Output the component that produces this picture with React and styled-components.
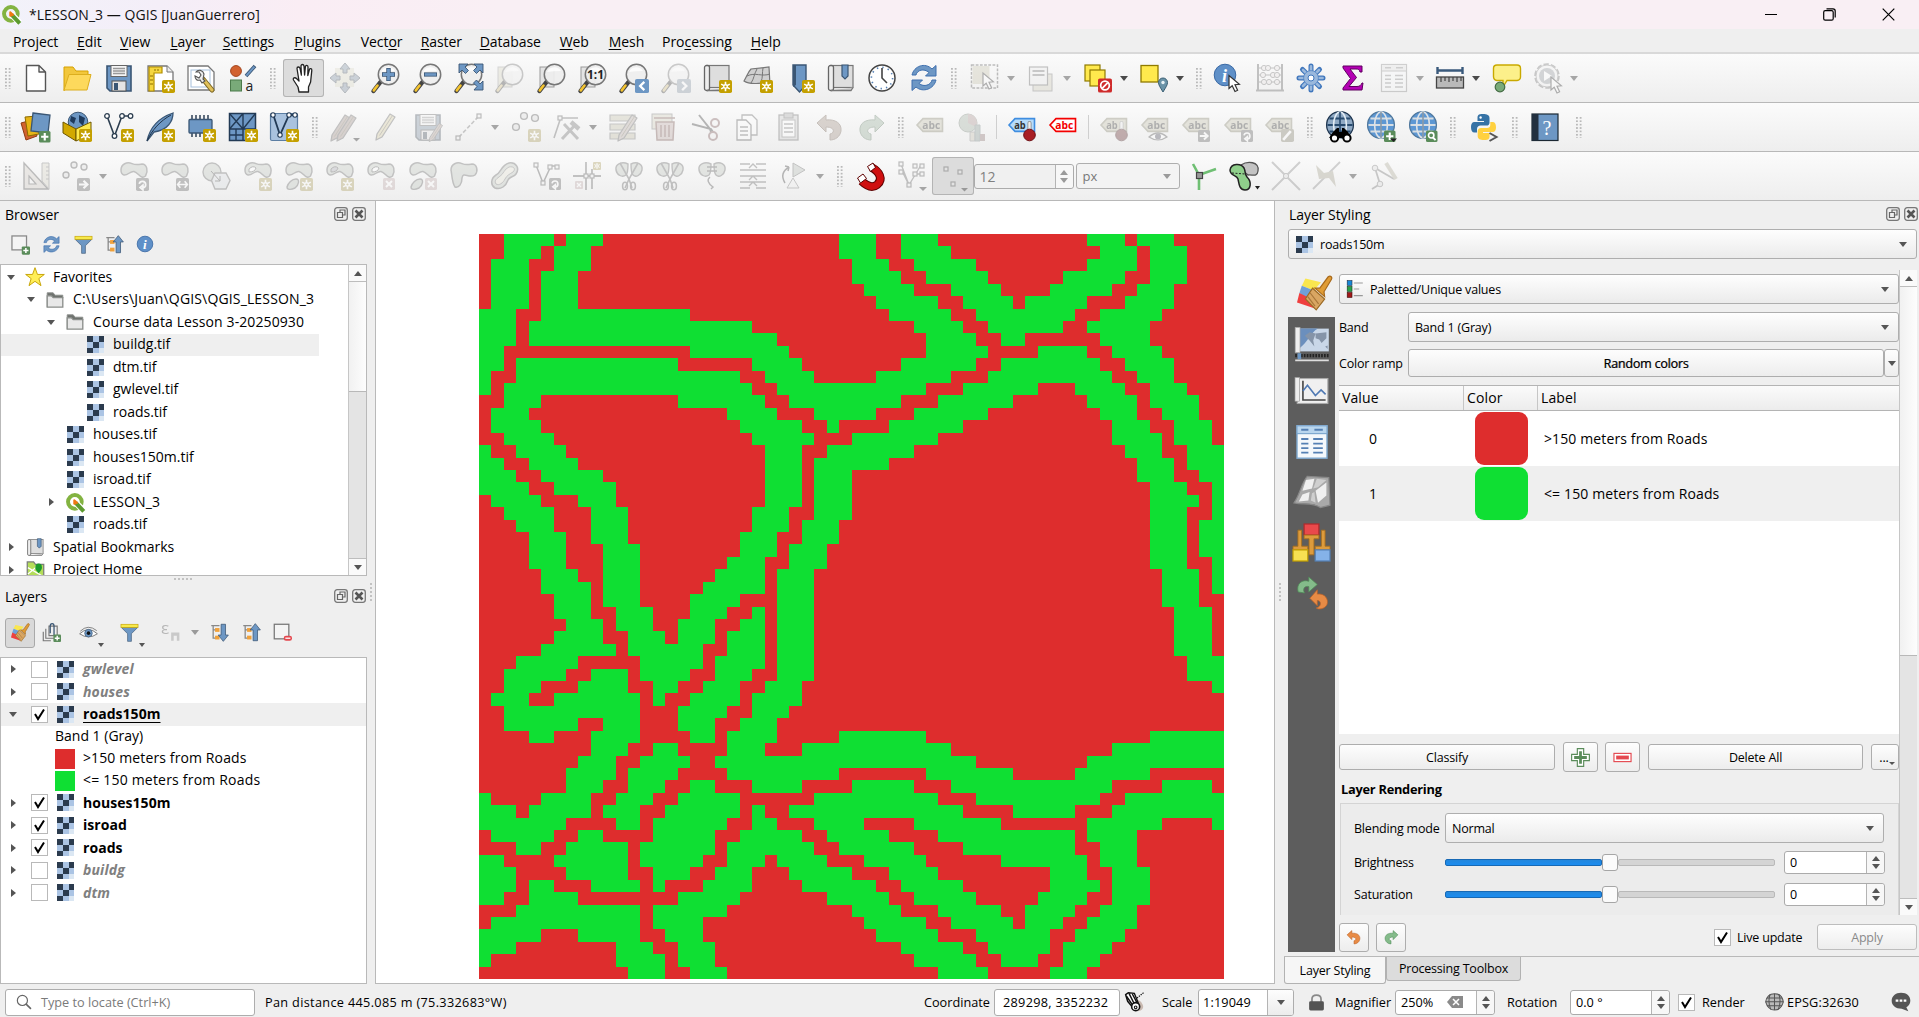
import React from "react";
import styled, { createGlobalStyle, css } from "styled-components";

const Global = createGlobalStyle`
  html, body { margin: 0; padding: 0; background: #efefef; }
  * { box-sizing: border-box; }
  body {
    font-family: "Open Sans", "Noto Sans", sans-serif;
    font-size: 14px;
    color: #000;
    overflow: hidden;
  }
`;

/* ------------------------------------------------------------------ */
/* Icon drawings, all on a 30 x 30 grid                                 */
/* ------------------------------------------------------------------ */

const BLUE = "#6d97c4";
const EDGE = "#3a5674";
const GOLD = "#c4a000";
const GREEN = "#5a8c5a";

const Badge = ({ x = 18, y = 18, s = 12, fill = GOLD, children }) => (
  <g transform={`translate(${x} ${y}) scale(${s / 12})`}>
    <rect width="12" height="12" rx="1.6" fill={fill} />
    {children}
  </g>
);
const Star = (p) => (
  <Badge x={17} y={17} s={13} {...p}>
    <path d="M6 1.6V10.4M2 3.8L10 8.2M10 3.8L2 8.2" stroke="#fff" strokeWidth="1.5" />
    <circle cx="6" cy="6" r="2.2" fill="#fff" />
    <circle cx="6" cy="6" r="1" fill={GOLD} />
  </Badge>
);
const Plus = (p) => (
  <Badge fill={GREEN} {...p}>
    <path d="M6 2.2V9.8M2.2 6H9.8" stroke="#fff" strokeWidth="2.2" />
  </Badge>
);
const Cross = (p) => (
  <Badge fill="#d8a5a5" {...p}>
    <path d="M3 3L9 9M9 3L3 9" stroke="#fff" strokeWidth="2" />
  </Badge>
);
const ArrowRight = (p) => (
  <Badge fill="#666" {...p}>
    <path d="M1.8 6H8M6 2.6L9.6 6L6 9.4" stroke="#fff" strokeWidth="2" fill="none" />
  </Badge>
);
const Turn = (p) => (
  <Badge fill="#666" {...p}>
    <path d="M3 5.4A3 3 0 1 1 6.4 9M6.4 6.6V11L3.8 8.8Z" stroke="#fff" strokeWidth="1.6" fill="none" />
  </Badge>
);
const Lens = ({ children, page }) => (
  <>
    {page && <rect x="3" y="4" width="14" height="20" fill={page === 2 ? "#ded9a8" : "#e4e4e4"} stroke="#999" strokeWidth="1" />}
    <path d="M9.5 19L2.5 28" stroke="#444" strokeWidth="4.4" strokeLinecap="round" />
    <path d="M6.5 22.5L2.8 27.4" stroke="#f4c430" strokeWidth="2.6" strokeLinecap="round" />
    <circle cx="17.5" cy="11.5" r="10.2" fill="#eeeeee" fillOpacity=".92" stroke="#777" strokeWidth="1.5" />
    <path d="M10 9A8 8 0 0 1 24 8Q17 8 10 9Z" fill="#fff" opacity=".8" />
    {children}
  </>
);
const Pencil = ({ t = "", fill = "#e6cf6a" }) => (
  <g transform={t}>
    <path d="M7 22L20 2L25 5L12 25L6 28Z" fill={fill} stroke="#666" strokeWidth="1.3" strokeLinejoin="round" />
    <path d="M9.5 23.5L22.5 3.5" stroke="#8a7a4a" strokeWidth="1" />
  </g>
);
const Globe = ({ children, dark }) => (
  <>
    <circle cx="15" cy="13" r="13.4" fill={dark ? "#8fa9c4" : "#5d97d3"} stroke={dark ? "#1f3650" : "#50789d"} strokeWidth="1.3" />
    <path d="M2.5 13H27.5M4.5 6.5H25.5M4.5 19.5H25.5" stroke={dark ? "#274a6e" : "#d7dde2"} strokeWidth="1.8" />
    <ellipse cx="15" cy="13" rx="6.4" ry="13" fill="none" stroke={dark ? "#e3edf5" : "#dfe3e7"} strokeWidth="1.6" />
    <path d="M15 0V26" stroke={dark ? "#274a6e" : "#8b9aa8"} strokeWidth="1.6" />
    {children}
  </>
);
const BLOB = "M2 9C2 3 8 .5 13 2.6C17 4.2 19 3.6 23 3C28 3 29.5 10 26.5 15C22 19 20 12 15 10.5C11 10 9 14.5 5 14C3 13.5 2 12 2 9Z";
const Blob = ({ d = BLOB, fill = "#b9c9b5" }) => <path d={d} fill={fill} stroke="#666" strokeWidth="1.5" />;
const Blob2 = () => (
  <>
    <Blob />
    <path d="M12 18C16 18 15 24 11 27C7 29 3 29 3 26C4 22 8 18 12 18Z" fill="#b9c9b5" stroke="#666" strokeWidth="1.4" />
  </>
);
const Tag = ({ fill = "#c9c38d", edge = "#8c8854", text = "abc", color = "#333", y = 7 }) => (
  <g transform={`translate(0 ${y - 7})`}>
    <path d="M2 14L8 7.6H27.5V20.4H8Z" fill={fill} stroke={edge} strokeWidth="1.6" />
    <text x="7.2" y="17.8" fontSize="10.5" fontWeight="700" fill={color} fontFamily="Open Sans" textLength={text === "ab" ? 11.5 : 18} lengthAdjust="spacingAndGlyphs">{text}</text>
  </g>
);
const Pin = () => (
  <>
    <path d="M22.5 19V11" stroke="#888" strokeWidth="4" strokeLinecap="round" />
    <path d="M22.5 19V11" stroke="#eee" strokeWidth="2.4" strokeLinecap="round" />
    <circle cx="22.5" cy="23" r="5.8" fill="#a81e24" stroke="#6d0d12" strokeWidth="1" />
  </>
);
const Cells = () => (
  <g shapeRendering="crispEdges">
    <rect x="2" y="2" width="26" height="26" fill="#dbe7f3" />
    <path d="M2 11H11V20H2ZM11 2H20V11H11ZM20 11H28V20H20ZM11 20H20V28H11Z" fill="#abc4e4" />
    <path d="M2 2H11V11H2ZM20 2H28V11H20ZM11 11H20V20H11ZM2 20H11V28H2Z" fill="#2b3b4e" />
  </g>
);
const Refresh = () => (
  <>
    <path d="M3 12C5 3 16 -1 23 6L27 2.5V13H16.5L20 9.5C15 5 8 7 7 12Z" fill={BLUE} stroke="#3e6fae" strokeWidth="1" />
    <path d="M27 17C25 26 14 30 7 24L3 27.5V17H13.5L10 20.5C15 24.5 22 22 23 17Z" fill={BLUE} stroke="#3e6fae" strokeWidth="1" />
  </>
);
const Cursor = ({ x = 0, y = 0 }) => (
  <path transform={`translate(${x} ${y})`} d="M0 0V13L3.2 10.2L6 16L8.6 14.8L6 9.2L10.4 8.8Z" fill="#fff" stroke="#333" strokeWidth="1.2" />
);
const Scissors = () => (
  <>
    <path d="M6 2L15 18L18 27M24 2L15 18L11 27" stroke="#666" strokeWidth="1.6" fill="none" />
    <ellipse cx="11" cy="25" rx="2.4" ry="3.8" fill="none" stroke="#666" strokeWidth="1.6" />
    <ellipse cx="19" cy="25" rx="2.4" ry="3.8" fill="none" stroke="#666" strokeWidth="1.6" />
  </>
);
const Halves = () => (
  <path d="M14 3C8 0 1 3 2 9C3 14 8 17 12 14C14 12 14 8 14 3ZM17 3C23 0 29 3 28 9C27 14 22 17 19 14C17 12 17 8 17 3Z" fill="#b9c9b5" stroke="#666" strokeWidth="1.4" />
);
const Brush = () => (
  <>
    <path d="M7 3L20 6L14 13L4 9Z" fill="#f9e64f" />
    <path d="M4 9L14 13L8 20L2 15Z" fill="#6f9fd8" />
    <path d="M2 15L10 19L15 28L0 23Z" fill="#ef3f3f" />
    <path d="M13 11L23 20L16 29L7 20Z" fill="#d9a662" stroke="#9b6a24" strokeWidth="1" />
    <path d="M11 15L18 24M9 18L15 26" stroke="#a9773a" strokeWidth="1" />
    <path d="M15 11L19 11L26 1.5C28 0 30 2 28.5 4L22.5 14L23 18Z" fill="#e09c35" stroke="#a8691b" strokeWidth="1" />
  </>
);
const UndoArrow = ({ fill = "#e88b45", edge = "#b9622a" }) => (
  <path d="M2 11L11 3V8C20 7 27 11 26 19C25 25 20 28 15 28V22C20 21 20 15 11 15V20Z" fill={fill} stroke={edge} strokeWidth="1" />
);
const RedoArrow = () => (
  <path d="M28 11L19 3V8C10 7 3 11 4 19C5 25 10 28 15 28V22C10 21 10 15 19 15V20Z" fill="#84bb8a" stroke="#4e8a56" strokeWidth="1" />
);
const Funnel = () => (
  <>
    <path d="M2 7H28L18 17V29H12V17Z" fill={BLUE} stroke={EDGE} strokeWidth="1" />
    <rect x="1.5" y="2" width="27" height="5" fill="#f7e94a" stroke="#c4a000" strokeWidth="1" />
  </>
);
const TreeArrow = ({ down }) => (
  <>
    <path d="M2 4H15M5 4V25M5 11H10M5 24H10" stroke="#888" strokeWidth="2" fill="none" />
    <rect x="8" y="8" width="7" height="6" fill="#f0a13a" />
    <rect x="8" y="20" width="7" height="6" fill="#f0a13a" />
    <path transform={down ? "rotate(180 21 15)" : ""} d="M21 1L29 11H24.5V28H17.5V11H13Z" fill={BLUE} stroke={EDGE} strokeWidth="1.2" />
  </>
);
const BookBase = () => (
  <>
    <rect x="5" y="2.5" width="22" height="22" fill="#dedede" stroke="#777" strokeWidth="1.2" />
    <rect x="2.5" y="2.5" width="5" height="25" rx="2" fill="#eee" stroke="#666" strokeWidth="1.3" />
    <path d="M5 27.5H25L27 24.5" fill="#ccc" stroke="#777" strokeWidth="1.3" />
  </>
);
const Logo = () => (
  <>
    <circle cx="14" cy="14" r="10.8" fill="none" stroke="#83b341" strokeWidth="6.2" />
    <path d="M14 14L28 28" stroke="#fff" strokeWidth="10" />
    <path d="M15.5 15.5L28 29" stroke="#5c9a2f" strokeWidth="6.4" />
    <path d="M13 11.5L17.5 15.5L13 17Z" fill="#ee7913" stroke="#ee7913" strokeWidth="3" strokeLinejoin="round" />
  </>
);
const Gear = () => (
  <>
    <g stroke="#4077bd" strokeWidth="5" strokeLinecap="round">
      <path d="M15 3V27M3 15H27M6.5 6.5L23.5 23.5M23.5 6.5L6.5 23.5" />
    </g>
    <g stroke="#9ab8dc" strokeWidth="2.6" strokeLinecap="round">
      <path d="M15 3.4V26.6M3.4 15H26.6M7 7L23 23M23 7L7 23" />
    </g>
    <circle cx="15" cy="15" r="7.4" fill="#9ab8dc" stroke="#4077bd" strokeWidth=".6" />
    <circle cx="15" cy="15" r="3" fill="#fff" stroke="#4077bd" strokeWidth="1" />
  </>
);
const Nodes = ({ pts }) => pts.map(([x, y], i) => (
  <rect key={i} x={x - 2} y={y - 2} width="4" height="4" fill="#eee" stroke="#555" strokeWidth="1.2" />
));
const Table = ({ head = "#b9d6ee", edge = "#7fa9cf", line = "#5580b4" }) => (
  <>
    <rect x="2.5" y="1.5" width="25" height="27" fill="#f4f8fb" stroke={edge} strokeWidth="1.2" />
    <rect x="2.5" y="1.5" width="25" height="6.5" fill={head} stroke={edge} strokeWidth="1" />
    <path d="M6 4.8H12M17 4.8H24M6 12.5H12M16 12.5H24M6 16.3H12M16 16.3H24M6 20.1H12M16 20.1H24M6 23.9H12M16 23.9H24" stroke={line} strokeWidth="1.5" />
  </>
);

const ART = {
  newFile: () => <path d="M5.5 2.5H18L24.5 9V28H5.5Z M18 2.5V9H24.5" fill="#fff" stroke="#555" strokeWidth="1.4" strokeLinejoin="round" />,
  open: () => (<>
    <path d="M2 28V4H11L14 8H26V13" fill="#f2c73c" stroke="#d6a100" strokeWidth="1" />
    <path d="M2 27L7 11.5H29L25 27Z" fill="#fdd95c" stroke="#dcae1e" strokeWidth="1" />
  </>),
  save: () => (<>
    <path d="M3 3H27V28H6L3 25Z" fill={BLUE} stroke={EDGE} strokeWidth="1.6" />
    <rect x="7" y="2.5" width="16" height="11" fill="#f5f5f5" stroke="#666" />
    <path d="M9 5.5H21M9 8H21M9 10.5H21" stroke="#999" strokeWidth="1.3" />
    <rect x="8" y="18" width="14" height="10" fill="#e4e4e4" stroke="#555" />
    <rect x="10" y="20" width="4" height="7" fill={EDGE} />
  </>),
  newLayout: () => (<>
    <path d="M3 3H22L28 9V28H3Z" fill="#fff" stroke="#777" strokeWidth="1.3" />
    <path d="M4 4H17V10H9V28H4Z" fill="#f5d63f" stroke="#b38f00" strokeWidth="1.2" />
    <path d="M10 6V8M13 6V8M5 13H8M5 17H8M5 21H8" stroke="#8a6c00" />
    <path d="M22 3V9H28" fill="#eee" stroke="#777" /><Star />
  </>),
  layoutMgr: () => (<>
    <path d="M2 3H22L28 9V27H2Z" fill="#fff" stroke="#777" strokeWidth="1.3" />
    <rect x="5" y="7" width="19" height="17" fill="#fff" stroke="#a6bfdc" />
    <path d="M17 16L26 27" stroke="#7a6420" strokeWidth="5" strokeLinecap="round" />
    <path d="M18 17L26 27" stroke="#e0c05a" strokeWidth="3" strokeLinecap="round" />
    <path d="M10 9C12 6 17 7 18 11L17 16L19 18L16 20L14 17C11 18 9 16 9 13L13 15L15 12L13 9Z" fill="#eee" stroke="#555" strokeWidth="1.1" />
  </>),
  styleMgr: () => (<>
    <circle cx="8" cy="8" r="5.4" fill="#d2622f" stroke="#a3431b" />
    <path d="M18 13L27 3" stroke={EDGE} strokeWidth="3.6" /><path d="M18.4 12.6L26.4 3.6" stroke={BLUE} strokeWidth="2" />
    <rect x="2.5" y="17" width="11" height="11" fill="#79aa79" stroke="#4b7a4b" />
    <text x="17.5" y="28" fontSize="14" fill="#222" fontFamily="Open Sans">a</text>
  </>),
  hand: () => (
    <path d="M10 29L9 24L4.5 17C3.5 15 6 14 7.5 15.5L10 18L8 5.5C8 3.6 10.5 3.4 11 5.4L12.4 12L12 3C12 1 14.6 1 15 3L15.6 12L16.4 3.6C16.7 1.8 19 2 19 4L18.8 12.6L20.4 6.6C21 5 23 5.4 22.8 7.4L21.6 19L19.5 24V29Z" fill="#fff" stroke="#222" strokeWidth="1.3" strokeLinejoin="round" />
  ),
  panSel: () => (<>
    <rect x="5" y="5" width="19" height="19" fill="#e3dfb4" />
    <path d="M15 0L20 6H17V10H13V6H10ZM15 30L20 24H17V20H13V24H10ZM0 15L6 10V13H10V17H6V20ZM30 15L24 10V13H20V17H24V20Z" fill={BLUE} stroke={EDGE} />
  </>),
  zoomIn: () => <Lens><path d="M17.5 5V18M11 11.5H24" stroke={EDGE} strokeWidth="4.4" /><path d="M17.5 5.8V17.2M11.8 11.5H23.2" stroke={BLUE} strokeWidth="2.8" /></Lens>,
  zoomOut: () => <Lens><path d="M11 11.5H24" stroke={EDGE} strokeWidth="4.2" /><path d="M11.8 11.5H23.2" stroke={BLUE} strokeWidth="2.6" /></Lens>,
  zoomFull: () => <Lens><path d="M5 1H14L11 4L14.5 7.5L11.5 10.5L8 7L5 10ZM29 1V10L26 7L22.5 10.5L19.5 7.5L23 4L20 1ZM29 27V18L26 21L22.5 17L19.5 20L23 23.5L20 27Z" fill={BLUE} stroke={EDGE} strokeWidth=".9" /></Lens>,
  zoomSel: () => <Lens page={2} />,
  zoomLayer: () => <Lens page={1} />,
  zoomNative: () => <Lens page={1}><text x="9" y="16" fontSize="12" fontWeight="700" fill="#222" fontFamily="Open Sans" textLength="17" lengthAdjust="spacingAndGlyphs">1:1</text></Lens>,
  zoomLast: () => <Lens><Badge x={16} y={16} s={14} fill={BLUE}><path d="M8 2.5L4.4 6L8 9.5" stroke="#fff" strokeWidth="2" fill="none" /></Badge></Lens>,
  zoomNext: () => <Lens><Badge x={16} y={16} s={14} fill="#7d9cc0"><path d="M4.4 2.5L8 6L4.4 9.5" stroke="#fff" strokeWidth="2" fill="none" /></Badge></Lens>,
  newMap: () => <><BookBase /><Star /></>,
  new3d: () => (<>
    <path d="M1 18C4 13 5 9 8 6L26 4L27 22C20 17 10 24 1 18Z" fill="#d0d0d0" stroke="#777" strokeWidth="1.2" />
    <path d="M4 13C12 9 19 14 27 11M14 6C11 11 11 16 8 20M20 5C19 10 20 14 18 19" stroke="#777" fill="none" /><Star />
  </>),
  newBookmark: () => <><path d="M8 2H21V22L14.5 29L8 22Z" fill={BLUE} stroke={EDGE} strokeWidth="1.4" /><path d="M8 2H11V22L8 24Z" fill={EDGE} /><Star /></>,
  bookmarks: () => <><BookBase /><path d="M16 2H22V13L19 16L16 13Z" fill={BLUE} stroke={EDGE} strokeWidth="1.2" /></>,
  clock: () => (<>
    <circle cx="15" cy="15" r="13" fill="#fff" stroke="#444" strokeWidth="1.5" />
    <circle cx="15" cy="15" r="10.6" fill="none" stroke="#5580b4" strokeWidth="1.6" strokeDasharray="1.4 4.15" />
    <path d="M15 5V15L20 20" stroke="#444" strokeWidth="1.6" fill="none" />
  </>),
  refresh: () => <Refresh />,
  select: () => (<>
    <rect x="1.5" y="2" width="26" height="23" fill="none" stroke="#555" strokeWidth="1.5" strokeDasharray="2.8 1.4" />
    <rect x="2.5" y="3" width="17" height="18" fill="#cfc791" /><Cursor x={13} y={10} />
  </>),
  selForm: () => (<>
    <rect x="7" y="11" width="19" height="17" fill="#d8d1a5" stroke="#777" />
    <rect x="3.5" y="4" width="18" height="18" fill="#eee" stroke="#666" strokeWidth="1.2" />
    <path d="M6.5 8H18.5M6.5 12H18.5" stroke="#777" strokeWidth="2.2" />
  </>),
  deselect: () => (<>
    <rect x="2" y="2" width="15" height="16" fill="#ffe94d" stroke="#8f7a00" strokeWidth="1.2" />
    <rect x="7" y="7" width="15" height="16" fill="#ffe94d" stroke="#8f7a00" strokeWidth="1.2" />
    <Badge x={15} y={15.5} s={14} fill="#cf2b2b"><circle cx="6" cy="6" r="3.7" fill="none" stroke="#fff" strokeWidth="1.5" /><path d="M3.6 8.4L8.4 3.6" stroke="#fff" strokeWidth="1.5" /></Badge>
  </>),
  selLoc: () => (<>
    <rect x="2" y="2.5" width="17" height="16.5" fill="#ffe94d" stroke="#8f7a00" strokeWidth="1.3" />
    <path d="M24 29C21 24 19.5 22 19.5 19.5A4.4 4.4 0 0 1 28.5 19.5C28.5 22 27 24 24 29Z" fill="#6a93a8" stroke="#3a5f74" strokeWidth="1" />
    <circle cx="24" cy="19.5" r="1.7" fill="#e8f2f6" />
  </>),
  identify: () => (<>
    <circle cx="12" cy="12" r="10.8" fill="#5f90c8" stroke="#3b6aa5" strokeWidth="1" />
    <text x="9" y="18.5" fontSize="18" fontStyle="italic" fontWeight="700" fill="#fff" fontFamily="Liberation Serif">i</text><Cursor x={16} y={12.5} />
  </>),
  abacus: () => (<>
    <path d="M3 1V28M27 1V28M1 27.5H29" stroke="#666" strokeWidth="2" />
    <path d="M3 5H27M3 12H27M3 19H27" stroke="#666" />
    {[[9, 5], [13, 5], [22, 5], [8, 12], [18, 12], [22, 12], [9, 19], [14, 19], [22, 19]].map(([x, y]) => <circle key={x + "-" + y} cx={x} cy={y} r="2.6" fill="#efe4e4" stroke="#777" />)}
  </>),
  gear: () => <Gear />,
  sigma: () => <path d="M5 3H24V9H22C21.5 6.5 20 6 18 6H12L18.5 14.5L11 23.5H19C22 23.5 23 22 24 20H25L24 27H5V25L12.5 15.5L5 5Z" fill="#b400b4" stroke="#5e005e" strokeWidth="1" />,
  table: () => <Table head="#e0e0e0" edge="#888" line="#888" />,
  measure: () => (<>
    <path d="M2 7.5H28M2.5 4V11M27.5 4V11" stroke="#3a5a7c" strokeWidth="2.4" />
    <rect x="1.5" y="14" width="27" height="11" fill="#b9b9b9" stroke="#444" strokeWidth="1.3" />
    <path d="M6 14V19M10 14V18M14 14V19M18 14V18M22 14V19M26 14V18" stroke="#444" strokeWidth="1.2" />
  </>),
  tips: () => (<>
    <path d="M5 2H25Q28.5 2 28.5 5.5V14Q28.5 17 25 17.5H15L11 24V17.5H5Q1.5 17 1.5 13.5V5.5Q1.5 2 5 2Z" fill="#fcf08a" stroke="#c9a900" strokeWidth="1.4" />
    <circle cx="8" cy="24" r="4.8" fill="#79aa79" stroke="#446b44" strokeWidth="1.2" />
  </>),
  action: () => (<>
    <circle cx="14" cy="13" r="11.5" fill="#f2f2f2" stroke="#777" strokeWidth="2.6" strokeDasharray="5.2 2" />
    <circle cx="14" cy="13" r="11" fill="#f2f2f2" stroke="#888" strokeWidth="1" />
    <circle cx="14" cy="13" r="8" fill="#8f9ca8" /><path d="M11 8L19 13L11 18Z" fill="#fff" /><Cursor x={18} y={14} />
  </>),

  dataSrc: () => (<>
    <path d="M0 11L11 8L16 24L5 28Z" fill="#d2622f" stroke="#8e3a13" />
    <path d="M4 5L16 4L18 22L7 24Z" fill="#e7b416" stroke="#8a6a00" />
    <path d="M12 1L29 3L27 21L10 19Z" fill={BLUE} stroke={EDGE} strokeWidth="1.3" /><Plus x={18} y={19} s={11.5} />
  </>),
  newGpkg: () => (<>
    <circle cx="16" cy="10" r="9.8" fill={BLUE} stroke={EDGE} /><path d="M9 4L14 6L12 12L8 9ZM17 3L23 6L21 14L17 10Z" fill="#1f3a5c" />
    <path d="M1 10L14 17V29L1 21Z" fill="#d2a800" stroke="#6d5600" /><path d="M14 17L29 10V22L14 29Z" fill="#ffe94d" stroke="#6d5600" /><Star />
  </>),
  newShp: () => (<>
    <path d="M3 4L10.5 24L18 4H26" stroke="#2c3e50" strokeWidth="1.6" fill="none" />
    {[[3, 4], [10.5, 24], [18, 4], [26.5, 4]].map(([x, y]) => <circle key={x} cx={x} cy={y} r="2.3" fill="#fff" stroke="#2c3e50" strokeWidth="1.3" />)}<Star />
  </>),
  newSpatialite: () => <><path d="M2 29C5 15 13 6 28 1C28 9 23 18 9 20Z" fill={BLUE} stroke={EDGE} strokeWidth="1.3" /><path d="M2 29C7 18 15 9 26 3" stroke="#20344a" fill="none" /><Star /></>,
  newMem: () => (<>
    <path d="M6 3V8M10 3V8M14 3V8M18 3V8M22 3V8M6 20V25M10 20V25M14 20V25" stroke="#20344a" strokeWidth="1.4" />
    <rect x="3" y="7.5" width="23" height="13.5" rx="1" fill={BLUE} stroke={EDGE} strokeWidth="1.3" /><Star />
  </>),
  newMesh: () => (<>
    <rect x="1.5" y="1.5" width="26" height="27" fill={BLUE} stroke="#223a55" strokeWidth="1.5" />
    <path d="M1.5 17H27.5M15 1.5V28M1.5 1.5L15 17M15 1.5L1.5 17M15 17L27.5 1.5M1.5 23H15M8 17V28" stroke="#223a55" strokeWidth="1.4" /><Star />
  </>),
  newGpx: () => (<>
    <rect x="1.5" y="1.5" width="27" height="27" rx="1.5" fill="#a9c2de" stroke="#5c7ea3" strokeWidth="1.2" />
    <path d="M4 2L11 23L20 3H27" stroke="#223a55" strokeWidth="1.8" fill="none" />
    {[[4, 3], [11, 23], [20, 3], [26, 3]].map(([x, y]) => <circle key={x} cx={x} cy={y} r="2.2" fill="#fff" stroke="#223a55" strokeWidth="1.1" />)}<Star />
  </>),
  pencils: () => <><Pencil t="translate(-5 1)" fill="#b98f80" /><Pencil t="translate(1 1)" fill="#b98f80" /><path d="M23 26H30L26.5 29.5Z" fill="#222" /></>,
  pencil: () => <Pencil t="translate(-1 0)" />,
  saveEdits: () => <>{ART.save()}<Pencil t="translate(12 10) scale(.7)" fill="#c99e90" /></>,
  line: () => <><path d="M5 25L24 5" stroke="#777" strokeWidth="1.6" strokeDasharray="4 2" /><Nodes pts={[[4, 26], [25, 4]]} /></>,
  addPoints: () => (<>
    {[[5, 15], [13, 4], [24, 6]].map(([x, y]) => <circle key={x} cx={x} cy={y} r="3.4" fill="#ddd" stroke="#555" strokeWidth="1.4" />)}<Star />
  </>),
  vertex: () => (<>
    <path d="M2 26L8 8M10 6H26" stroke="#666" strokeWidth="1.6" /><Nodes pts={[[8, 6]]} />
    <path d="M10 27L24 12M12 12L26 27" stroke="#777" strokeWidth="3" /><path d="M19 10L27 17" stroke="#777" strokeWidth="4.4" />
  </>),
  multiEdit: () => <><path d="M2 3H27V9H2ZM2 12H27V18H2ZM2 21H27V27H2Z" fill="#cbc58e" stroke="#777" strokeWidth="1.2" /><Pencil t="translate(4 1)" fill="#c9ab9e" /></>,
  trash: () => (<>
    <rect x="2" y="2" width="20" height="15" fill="#d8d1a5" stroke="#777" />
    <path d="M4 6H25M6 10H24L23 28H7Z" fill="#dba9a0" stroke="#a14c3f" strokeWidth="1.5" /><path d="M11 13V25M15 13V25M19 13V25" stroke="#a14c3f" strokeWidth="1.5" />
  </>),
  cut: () => (<>
    <path d="M1 12L20 17L22 20M8 3L19 17L20 20" stroke="#444" strokeWidth="2" fill="none" />
    <circle cx="24" cy="11" r="4" fill="none" stroke="#a55" strokeWidth="2" /><circle cx="22" cy="24" r="4" fill="none" stroke="#a55" strokeWidth="2" />
  </>),
  copy: () => (<>
    <path d="M10 3H20L25 8V23H10Z" fill="#fff" stroke="#666" strokeWidth="1.3" /><path d="M5 8H14L19 13V28H5Z" fill="#fff" stroke="#555" strokeWidth="1.3" />
    <path d="M8 15H16M8 19H16M8 23H16" stroke="#666" strokeWidth="1.6" />
  </>),
  paste: () => (<>
    <rect x="5" y="3" width="19" height="25" fill="#ccc" stroke="#666" strokeWidth="1.3" /><rect x="10" y="1" width="9" height="5" fill="#aaa" stroke="#666" />
    <rect x="8" y="8" width="13" height="17" fill="#fff" stroke="#777" /><path d="M10 12H19M10 16H19M10 20H19" stroke="#777" strokeWidth="1.4" />
  </>),
  undo: () => <UndoArrow fill="#b98f70" edge="#8a6040" />,
  redo: () => <RedoArrow />,
  tag: () => <Tag y={6} />,
  diagram: () => (<>
    <circle cx="11" cy="11" r="9" fill="#99b899" stroke="#6c8a6c" /><path d="M11 11V2A9 9 0 0 1 19 15Z" fill="#c9908a" />
    <path d="M13 20H18V29H13Z" fill="#cfc39a" stroke="#888" /><path d="M18 13H23V29H18Z" fill="#7fa396" stroke="#688" /><path d="M23 22H28V29H23Z" fill="#b0746e" />
  </>),
  labelPin: () => <><Tag fill="#b7dcfb" edge="#3f8de0" text="ab" y={6} /><Pin /></>,
  labelRed: () => <Tag fill="#fff" edge="#f40000" text="abc" color="#f40000" y={6} />,
  labPinOff: () => <><Tag text="ab" y={6} /><Pin /></>,
  labEye: () => <><Tag y={6} /><path d="M9 25Q18 17 27 25Q18 31 9 25Z" fill="#fff" stroke="#555" strokeWidth="1.2" /><circle cx="18" cy="24.5" r="3" fill="#557" /></>,
  labMove: () => <><Tag y={6} /><ArrowRight x={17} /></>,
  labRot: () => <><Tag y={6} /><Turn x={18} /></>,
  labEdit: () => <><Tag y={6} /><Badge x={17} y={17} s={13} fill="#8d8556"><path d="M2 10L9 2" stroke="#fff" strokeWidth="2.4" /></Badge></>,
  metaSearch: () => <Globe dark><path d="M8 20L12 16H14V20H17V16H19L23 20L26 26H4Z" fill="#000" /><circle cx="9.5" cy="26" r="3.6" fill="#fff" stroke="#000" strokeWidth="2" /><circle cx="22" cy="26" r="3.6" fill="#fff" stroke="#000" strokeWidth="2" /></Globe>,
  globeAdd: () => <Globe><Plus x={18} y={18.5} s={11.5} /><path d="M24 26.5H31L27.5 30Z" fill="#222" /></Globe>,
  globeFind: () => <Globe><Badge x={18} y={18.5} s={11.5} fill={GREEN}><circle cx="5.4" cy="5" r="2.8" fill="none" stroke="#fff" strokeWidth="1.7" /><path d="M7 7L10 10" stroke="#fff" strokeWidth="2" /></Badge></Globe>,
  python: () => (<>
    <path d="M14 2C9 2 8.5 3.5 8.5 6V9H15V10H5.5C3 10 2 12 2 15C2 18.5 3 20.5 5.5 20.5H8V17C8 14.8 9.5 13.5 11.5 13.5H17.5C19.5 13.5 20.5 12.3 20.5 10.4V6C20.5 3 18 2 14 2Z" fill="#3572a5" />
    <path d="M15 28C20 28 20.5 26.5 20.5 24V21H14V20H23.5C26 20 27 18 27 15.4C27 12 26 10 23.5 10H21.3V13C21.3 15 20 16 18 16H12C10 16 8.7 17.3 8.7 19.2V24C8.7 27 11 28 15 28Z" fill="#ffd13f" />
    <circle cx="11.6" cy="5.5" r="1.2" fill="#fff" />
    <path d="M20.5 21L27.5 25L20.5 29" stroke="#555" strokeWidth="2" fill="none" />
  </>),
  help: () => (<>
    <rect x="2" y="2" width="26" height="26.5" fill={BLUE} stroke="#1c2833" strokeWidth="1.2" /><rect x="2" y="2" width="6.5" height="26.5" fill="#22303f" />
    <text x="12.5" y="22.5" fontSize="20" fill="#fff" fontFamily="Liberation Serif">?</text>
  </>),

  cadTool: () => <><path d="M3 2L27 28H3Z" fill="#d9cdbb" stroke="#555" strokeWidth="1.4" /><path d="M8 15L15 23H8Z" fill="#f5f5f5" stroke="#555" strokeWidth="1.2" /><path d="M21 2H28V28L21 20Z" fill="#ddd6b4" stroke="#777" /><path d="M25 6H28M25 10H28M25 14H28M25 18H28" stroke="#777" /></>,
  moveF: () => <>{[[4, 14], [12, 4], [22, 6]].map(([x, y]) => <circle key={x} cx={x} cy={y} r="3" fill="#ddd" stroke="#555" strokeWidth="1.4" />)}<ArrowRight x={15} y={17} s={13} /></>,
  rotateF: () => <><Blob /><Turn x={17} y={17} s={13} /></>,
  scaleF: () => <><Blob /><Badge x={16} y={17} s={13} fill="#666"><path d="M2 6H10M4 3L1.5 6L4 9M8 3L10.5 6L8 9" stroke="#fff" strokeWidth="1.5" fill="none" /></Badge></>,
  simplify: () => <><circle cx="11" cy="11" r="9" fill="#b9c9b5" stroke="#666" strokeWidth="1.4" /><path d="M14 12H25L29 19.5L25 28H14L10.5 19.5Z" fill="#d5dde5" stroke="#666" strokeWidth="1.4" /><path d="M10 10L19 20M19 15V20H14" stroke="#444" fill="none" /></>,
  addRing: () => <><Blob /><path d="M6 8Q10 4 13 7Q12 11 6 11Z" fill="#fff" stroke="#555" /><Star x={16} /></>,
  addPart: () => <><Blob2 /><Star x={16} /></>,
  fillRing: () => <><Blob /><path d="M6 8Q10 4 13 7Q12 11 6 11Z" fill="#aab" stroke="#555" /><Star x={16} /></>,
  delRing: () => <><Blob /><path d="M6 8Q10 4 13 7Q12 11 6 11Z" fill="#fff" stroke="#555" /><Cross x={17} y={17} s={12} /></>,
  delPart: () => <><Blob2 /><Cross x={17} y={17} s={12} /></>,
  reshape: () => <Blob d="M2 9C2 3 8 .5 13 2.6C17 4.2 19 3.6 23 3C28 3 29.5 10 26 14C20 18 14 10 13 17C13 23 10 27 6 26C3 22 3 14 2 9Z" />,
  offset: () => <><Blob d="M19 2C26 1 30 7 26 13C24 16 20 15 18 19C16 25 11 29 5 27C0 24 1 17 6 14C11 12 11 4 19 2Z" /><path d="M19 6C24 5 26 8 23 11C20 13 17 14 15 18C13 22 9 25 6 23C4 20 6 18 9 16C14 13 14 8 19 6Z" fill="#e9e5c0" stroke="#777" /></>,
  reverse: () => <><path d="M4 4L11 22L19 5H25" stroke="#555" strokeWidth="1.5" fill="none" /><Nodes pts={[[4, 4], [11, 22], [18, 6], [25, 6]]} /><Turn x={17} y={17} s={12} /></>,
  trim: () => <><path d="M0 15H28M13 1V29M19 8V28" stroke="#666" strokeWidth="1.8" /><Nodes pts={[[13, 15], [19, 15]]} /><Star x={20} y={1} s={8} /><Cross x={2} y={20} s={8} /></>,
  splitF: () => <><Halves /><Scissors /></>,
  splitP: () => <><Halves /><Scissors /></>,
  merge: () => <><Halves /><path d="M10 6H20M10 10H20M13 16Q8 20 16 26L14 28" stroke="#555" strokeWidth="1.4" fill="none" /></>,
  mergeAttr: () => <path d="M2 3H12M18 3H28M2 9H28M2 15H28M2 21H28M2 27H12M18 27H28M11 7L15 3L19 7M11 19L15 15L19 19M11 25L15 21L19 25" stroke="#666" strokeWidth="1.4" fill="none" />,
  rotSym: () => <><path d="M14 2V16L26 9Z" fill="#aebfae" stroke="#666" /><path d="M8 27L14 17L20 27Z" fill="#eee" stroke="#777" /><path d="M6 22Q0 12 10 6M10 6L6 5M10 6L9 10" stroke="#444" strokeWidth="1.5" fill="none" /></>,
  magnet: () => (<>
    <path d="M17.5 6.5C25 12 28 20 21 24.5C15 28 10 24 6 19" stroke="#5e0000" strokeWidth="8.600" fill="none" transform="rotate(-8 15 15)" />
    <path d="M18 6.5C25 12 28 20 21 24.5C15 28 10 24 6 19" stroke="#cf0f0f" strokeWidth="6.600" fill="none" transform="rotate(-8 15 15)" />
    <path d="M12.500 5.500L18 2L20.500 6.500L15.500 10.500ZM2.500 17L8 13L11.500 17.500L5.500 22Z" fill="#fff" stroke="#5e0000" />
  </>),
  snapAll: () => <><path d="M4 3L12 24L24 4M24 13H16M5 10L12 24" stroke="#666" strokeWidth="1.4" fill="none" /><Nodes pts={[[4, 3], [4, 11], [18, 5], [25, 5], [18, 13], [25, 13], [12, 24]]} /><path d="M22 26H30L26 30Z" fill="#222" /></>,
  snapType: () => <><Nodes pts={[[8, 8], [22, 11], [15, 23]]} /><path d="M23 27H30L26.500 30.500Z" fill="#222" /></>,
  topo: () => <><path d="M5 3L11 14L28 8M11 14V29" stroke="#6fbf73" strokeWidth="2.6" fill="none" /><rect x="8.500" y="11.500" width="6" height="6" fill="#999" stroke="#444" strokeWidth="1.2" /></>,
  avoid: () => (<>
    <path d="M12 4C18 0 31 0 29 10C28 17 23 13 19 14L13 9Z" fill="#c3c3c3" stroke="#555" strokeWidth="1.3" />
    <path d="M1 9C2 2 12 2 15 7C17 11 15 12 18 16C23 21 22 29 16 29C10 29 10 22 9 18C8 14 1 15 1 9Z" fill="#8fcf8b" stroke="#222" strokeWidth="1.5" />
    <path d="M3 12L16 13" stroke="#222" strokeDasharray="2 1.500" /><path d="M26 25H31L28.500 28.500Z" fill="#222" />
  </>),
  snapInt: () => <><path d="M1 1L29 29M29 1L1 29" stroke="#888" strokeWidth="2" /><circle cx="15" cy="15" r="2.600" fill="#ddd" stroke="#777" /></>,
  tracing: () => <><path d="M1 28L28 1" stroke="#888" strokeWidth="1.800" /><path d="M4 4L12 12L21 10L24 26L17 17L7 18Z" fill="#aca274" /></>,
  selfSnap: () => <><path d="M4 28L12 23L7 7L26 18" stroke="#777" strokeWidth="1.800" fill="none" /><circle cx="7" cy="7" r="2.800" fill="#ddd" stroke="#777" /><circle cx="12" cy="23" r="2.800" fill="#ddd" stroke="#777" /><path d="M18 2L28 18" stroke="#b5ac80" strokeWidth="4" /></>,

  funnel: () => <Funnel />,
  addLayer: () => <><rect x="1.500" y="1.500" width="23" height="22" fill="#f4f4f4" stroke="#888" strokeWidth="2" /><Plus x={17} y={18} s={13} /></>,
  collapse: () => <TreeArrow />,
  expand: () => <TreeArrow down />,
  info: () => <><circle cx="15" cy="15" r="13" fill="#5f90c8" stroke="#3b6aa5" strokeWidth="1.400" /><text x="11.500" y="23" fontSize="22" fontStyle="italic" fontWeight="700" fill="#fff" fontFamily="Liberation Serif">i</text></>,
  brush: () => <Brush />,
  addGroup: () => <><path d="M2 14V28H14M6 9V24H20M11 5H24V20H11Z" fill="none" stroke="#777" strokeWidth="1.800" /><path d="M13 16V5Q13 1 16 1Q19 1 19 5V19" stroke={EDGE} strokeWidth="2" fill="none" /><Plus x={18} y={18} /></>,
  eye: () => <><path d="M1 17Q15 4 29 17Q15 27 1 17Z" fill="#fff" stroke="#777" strokeWidth="1.500" /><circle cx="15" cy="16" r="6" fill={BLUE} stroke={EDGE} /><circle cx="15" cy="16" r="2.800" fill="#111" /><path d="M2 13Q14 1 28 12" stroke="#777" strokeWidth="1.400" fill="none" /></>,
  epsilon: () => <><text x="0" y="17" fontSize="27" fill="#555" fontFamily="Open Sans">ε</text><path d="M16 28V15H29V28H25V20H20V28Z" fill="#888" /></>,
  removeLayer: () => <><rect x="2" y="2" width="23" height="23" fill="#f4f4f4" stroke="#777" strokeWidth="2" /><rect x="17" y="20" width="13" height="8" rx="3.500" fill="#e4484f" /><path d="M19.500 24H27.500" stroke="#fff" strokeWidth="2" /></>,
  cells: () => <Cells />,
  star: () => <path d="M15 1L18.700 11.200H29L20.800 17.400L24 28L15 21.500L6 28L9.200 17.400L1 11.200H11.300Z" fill="#ffee58" stroke="#c4a000" strokeWidth="1.400" />,
  folder: () => <><path d="M2 27V3H12L15 7H28V12" fill="#6f736f" stroke="#8a8d8a" strokeWidth="1.500" /><path d="M2 8H9L12 11H28V27H2Z" fill="#e8e8e8" stroke="#8a8d8a" strokeWidth="2.200" /></>,
  logo: () => <Logo />,
  bookTree: () => <><BookBase /><path d="M18 1H24V13L21 16L18 13Z" fill={BLUE} stroke={EDGE} /></>,
  home: () => <><path d="M2 27V3H12L15 7H28V27Z" fill="#b5dd5a" stroke="#7a7d7a" strokeWidth="2" /><path d="M3 12L27 26M3 22L18 10" stroke="#fff" strokeWidth="2" /><path d="M20 21C15 15 14 13 15 10.500A5 5 0 0 1 25 10.500C26 13 24 16 20 21Z" fill="#1c9a2c" /></>,
  palette: () => (<>
    <path d="M13 5H28M13 15H22M13 26H28" stroke="#999" strokeWidth="1.800" />
    <rect x="2" y="1" width="8" height="8" fill="#1789d8" stroke="#1c2f4a" /><rect x="2" y="11" width="8" height="8" fill="#27a349" stroke="#123a1e" /><rect x="2" y="21" width="8" height="8" fill="#a11919" stroke="#3d0808" />
  </>),
  transp: () => <><rect x="4" y="3" width="25" height="19" fill="#c9d7e8" /><path d="M4 3H20C14 6 12 14 4 20Z" fill="#6b8fbd" /><path d="M9 9L13 6L18 7L16 13L17 18L13 13ZM18 7L27 6L27 11L23 15L21 12L18 11ZM26 18L28 17V20Z" fill="#8594a8" /><rect x="1" y="2" width="4" height="21" fill="#eee" stroke="#aaa" strokeWidth=".6" /><path d="M1 25.500H29" stroke="#222" strokeWidth="2.600" strokeDasharray="1.400 1" /><rect x="3" y="23.500" width="3" height="5" fill={BLUE} /><path d="M1 29.500H29" stroke="#ddd" strokeWidth="1.500" /></>,
  histogram: () => <><rect x="2" y="4" width="27" height="22" fill="#f0f0f0" stroke="#aaa" /><rect x="0" y="3" width="4" height="21" fill="#eee" stroke="#999" strokeWidth=".6" /><path d="M7 6V23H27" stroke="#444" strokeWidth="1.400" fill="none" /><path d="M7 15L11 10L18 19L23 14L27 18" stroke="#4f79b3" strokeWidth="1.400" fill="none" /></>,
  tablePanel: () => <Table />,
  relief: () => <><path d="M0 24C5 17 6 8 11 2L29 3L30 26L22 28C15 23 8 26 0 24Z" fill="#a9a9a9" stroke="#888" /><path d="M10 5L17 4L15 12L7 14ZM7 17L13 15L12 22L4 23ZM18 14L27 7V18L20 24Z" fill="#f0f0f0" /><path d="M19 4L27 5L20 11L16 12ZM15 16L17 15L18 24L14 22Z" fill="#cfcfcf" /></>,
  brushes: () => (<>
    <rect x="9" y="0" width="12" height="9" fill="#e9494b" stroke="#b02a2c" /><path d="M9 9H21V12H17V25H13V12H9Z" fill="#dd9b3c" stroke="#a86e1c" strokeWidth=".700" />
    <path d="M4 5H7V18H12V21H0V18H4ZM23 5H26V18H30V21H18V18H23Z" fill="#dd9b3c" stroke="#a86e1c" strokeWidth=".700" />
    <rect x="0" y="21" width="12" height="9" fill="#f7e152" stroke="#c4a000" /><rect x="18" y="21" width="12" height="9" fill="#85b2e8" stroke="#5580b4" />
  </>),
  history: () => <><path d="M2 14C0 6 6 2 12 4V0L20 7L12 14V9C8 8 6 11 8 15Z" fill="#84bb8a" stroke="#4e8a56" strokeWidth=".700" /><path d="M13 20L20 12V16C27 15 31 21 29 26C27 30 21 31 19 29C24 28 24 22 20 22V27Z" fill="#e88b45" stroke="#b9622a" strokeWidth=".700" /></>,
  undoC: () => <UndoArrow />,
  plusFill: () => <><path d="M10 1H20V10H29V20H20V29H10V20H1V10H10Z" fill="#fff" stroke={GREEN} strokeWidth="1.800" /><path d="M15 5V25M5 15H25" stroke={GREEN} strokeWidth="4.400" /></>,
  minusFill: () => <><rect x="1.500" y="8.500" width="27" height="13" fill="#fff" stroke="#e4484f" strokeWidth="1.800" /><rect x="5" y="12" width="20" height="6" fill="#e4484f" /></>,
  search: () => <><circle cx="12" cy="12" r="9.500" fill="none" stroke="#666" strokeWidth="2.200" /><path d="M19 19L28 28" stroke="#666" strokeWidth="3" /></>,
  lock: () => <><path d="M7 14V9Q7 2 15 2Q23 2 23 9V14" fill="none" stroke="#888" strokeWidth="3" /><rect x="2" y="13" width="26" height="16" rx="2.500" fill="#545454" /></>,
  crs: () => <><path d="M15 1Q27 1 29 14H1Q3 1 15 1ZM1 14Q5 27 15 27Q25 27 29 14" fill="#bbb" stroke="#555" strokeWidth="1.600" /><path d="M15 1V27M8 2Q4 14 9 26M22 2Q26 14 21 26M3 8H27M3 20H27" stroke="#555" strokeWidth="1.600" fill="none" /></>,
  bubble: () => <><path d="M15 1C24 1 29 6 29 13C29 18 26 21 23 23L26 29L16 25C7 25 1 20 1 13C1 6 7 1 15 1Z" fill="#555" /><path d="M7 13H11M13 13H17M19 13H23" stroke="#fff" strokeWidth="3.600" /></>,
  mouse: () => (<>
    <path d="M12 12C20 8 29 18 27 24C24 30 14 31 9 24Z" fill="#c9b9b0" />
    <path d="M1 4L5 1L14 2L20 17L10 21L4 14Z" fill="#fff" stroke="#111" strokeWidth="2.200" />
    <path d="M6 2L14 18M2 6L11 19M11 3L18 16" stroke="#111" strokeWidth="2.200" />
    <circle cx="16" cy="22" r="6" fill="#fff" stroke="#111" strokeWidth="2.400" /><circle cx="16" cy="23" r="2" fill="none" stroke="#111" strokeWidth="1.600" />
    <path d="M18 9L28 1" stroke="#111" strokeWidth="1.800" strokeDasharray="2 1.500" />
  </>),
};

const IconSvg = styled.svg`
  flex: none;
  display: block;
  width: ${(p) => p.$s}px;
  height: ${(p) => p.$s}px;
  overflow: visible;
  ${(p) => p.$off && css`filter: grayscale(0.6); opacity: 0.36;`}
`;
const Icon = ({ name, size = 30, off }) => (
  <IconSvg viewBox="0 0 30 30" $s={size} $off={off}>{ART[name]()}</IconSvg>
);

const Caret = styled.span`
  flex: none;
  width: 0;
  height: 0;
  border: ${(p) => p.$s || 4.5}px solid transparent;
  ${(p) => (p.$up ? `border-top: 0; border-bottom: ${(p.$s || 4.5) + 0.5}px solid ${p.$c || "#555"};` : p.$right
    ? `border-right: 0; border-left: ${(p.$s || 4.5) + 0.5}px solid ${p.$c || "#555"};`
    : `border-bottom: 0; border-top: ${(p.$s || 4.5) + 0.5}px solid ${p.$c || "#555"};`)}
`;

/* ------------------------------------------------------------------ */
/* Window frame                                                         */
/* ------------------------------------------------------------------ */

const Window = styled.div`
  width: 1919px;
  height: 1017px;
  display: flex;
  flex-direction: column;
  background: #efefef;
  overflow: hidden;
`;
const TitleBar = styled.header`
  flex: none;
  height: 29px;
  display: flex;
  align-items: center;
  padding: 0 0 1px 2px;
  background: linear-gradient(90deg, #f2f2fa 0, #f4eef8 160px, #faedf4 300px, #f9eff4 500px);
`;
const Title = styled.span`
  margin-left: 8px;
  font-size: 14px;
  letter-spacing: 0.05px;
  color: #111;
  flex: 1;
`;
const WinButton = styled.span`
  width: ${(p) => p.$w}px;
  height: 29px;
  display: flex;
  align-items: center;
  justify-content: center;
`;
const MenuBar = styled.nav`
  flex: none;
  height: 25px;
  display: flex;
  align-items: center;
  padding-left: 13px;
  border-bottom: 2px solid #d9d9d9;
`;
const MenuItem = styled.span`
  width: ${(p) => p.$w}px;
  white-space: nowrap;
  letter-spacing: -0.05px;
  padding-top: 1px;
  u { text-underline-offset: 2px; text-decoration-thickness: 1px; }
`;
const ToolRow = styled.div`
  flex: none;
  height: 49px;
  display: flex;
  align-items: center;
  background: linear-gradient(#fbfbfb, #eeeeee);
  border-bottom: 1px solid #b8b8b8;
`;
const Grip = styled.span`
  flex: none;
  width: ${(p) => p.$w}px;
  height: 21px;
  display: flex;
  justify-content: center;
  &::before {
    content: "";
    width: 6px;
    background-image: radial-gradient(circle at 1px 1px, #b9b9b9 0.9px, transparent 1.1px);
    background-size: 3.7px 3.4px;
  }
`;
const Slot = styled.span`
  flex: none;
  width: ${(p) => (p.$menu ? 56.4 : p.$w)}px;
  height: 38px;
  display: flex;
  align-items: center;
  gap: 7px;
  padding-left: ${(p) => (p.$w - 30) / 2}px;
  ${(p) => p.$on && css`
    background: #dcdcdc;
    box-shadow: inset 0 0 0 1px #b4b4b4;
    border-radius: 3px;
  `}
`;
const Divider = styled.span`
  flex: none;
  width: 1px;
  height: 24px;
  margin: 0 ${(p) => p.$m}px;
  background: #cfcfcf;
`;

/* Suffixes: "+" has a drop-down, "-" is disabled, "*" is pressed; "|n" is a grip, "/n" a divider. */
const Tools = ({ items, pitch }) => items.map((t, i) => {
  if (t[0] === "|") return <Grip key={i} $w={Number(t.slice(1))} />;
  if (t[0] === "/") return <Divider key={i} $m={Number(t.slice(1))} />;
  const menu = t.includes("+");
  const off = t.includes("-");
  const on = t.includes("*");
  const name = t.replace(/[+\-*]/g, "");
  return (
    <Slot key={i} $w={pitch} $menu={menu} $on={on}>
      <Icon name={name} off={off} />
      {menu && <Caret $c={off ? "#a6a6a6" : "#4a4a4a"} />}
    </Slot>
  );
});

const ROW1 = ["|15.3", "newFile", "open", "save", "newLayout", "layoutMgr", "styleMgr", "|19.6", "hand*", "panSel-", "zoomIn", "zoomOut", "zoomFull", "zoomSel-", "zoomLayer", "zoomNative", "zoomLast", "zoomNext-", "newMap", "new3d", "newBookmark", "bookmarks", "clock", "refresh", "|19.6", "select-+", "selForm-+", "deselect+", "selLoc+", "|18.2", "identify", "abacus-", "gear", "sigma", "table-+", "measure+", "tips", "action-+"];
const ROW2 = ["|15.3", "dataSrc", "newGpkg", "newShp", "newSpatialite", "newMem", "newMesh", "newGpx", "|19.6", "pencils-", "pencil-", "saveEdits-", "line-+", "addPoints-", "vertex-+", "multiEdit-", "trash-", "cut-", "copy-", "paste-", "undo-", "redo-", "|17.4", "tag-", "diagram-", "/4", "labelPin", "labelRed", "/4", "labPinOff-", "labEye-", "labMove-", "labRot-", "labEdit-", "|19.6", "metaSearch", "globeAdd", "globeFind", "|20", "python", "|20", "help", "|26"];
const ROW3A = ["|15.3", "cadTool-", "moveF-+", "rotateF-", "scaleF-", "simplify-", "addRing-", "addPart-", "fillRing-", "delRing-", "delPart-", "reshape-", "offset-", "reverse-", "trim-", "splitF-", "splitP-", "merge-", "mergeAttr-", "rotSym-+", "|19.6", "magnet", "snapAll-", "snapType-*"];
const ROW3B = ["topo", "avoid", "snapInt-", "tracing-+", "selfSnap-"];

const MENUS = [["Pro", "j", "ect", 64], ["", "E", "dit", 43], ["", "V", "iew", 50.3], ["", "L", "ayer", 52.4], ["", "S", "ettings", 71.6], ["", "P", "lugins", 66.4], ["Vect", "o", "r", 60], ["", "R", "aster", 59], ["", "D", "atabase", 80], ["", "W", "eb", 49], ["", "M", "esh", 53.4], ["Pro", "c", "essing", 88.7], ["", "H", "elp", 60]];

/* ------------------------------------------------------------------ */
/* Form widgets                                                         */
/* ------------------------------------------------------------------ */

const Combo = styled.div`
  flex: ${(p) => (p.$w ? "none" : 1)};
  ${(p) => p.$w && `width: ${p.$w}px;`}
  height: ${(p) => p.$h || 30}px;
  display: flex;
  align-items: center;
  gap: 6px;
  padding: 0 ${(p) => (p.$pr === undefined ? 9 : p.$pr)}px 0 6px;
  border: 1px solid #aeaeae;
  border-radius: 3px;
  background: ${(p) => (p.$off ? "#f3f3f3" : "linear-gradient(#fefefe, #ebebeb)")};
  color: ${(p) => (p.$off ? "#787878" : "#000")};
  font-size: ${(p) => p.$fs || 12.5}px;
`;
const Grow = styled.span`
  flex: 1;
  white-space: nowrap;
`;
const PushButton = styled.button`
  flex: ${(p) => (p.$w ? "none" : 1)};
  ${(p) => p.$w && `width: ${p.$w}px;`}
  height: ${(p) => p.$h || 26}px;
  padding: 0;
  display: flex;
  align-items: center;
  justify-content: center;
  border: 1px solid ${(p) => (p.disabled ? "#bdbdbd" : "#adadad")};
  border-radius: 3px;
  background: linear-gradient(#fdfdfd, #ededed);
  font: inherit;
  letter-spacing: inherit;
  color: ${(p) => (p.disabled ? "#8a8a8a" : "#000")};
  ${(p) => p.$heavy && "text-shadow: 0.6px 0 0 rgba(0, 0, 0, 0.55);"}
`;
const SpinBox = styled.div`
  flex: none;
  width: ${(p) => p.$w}px;
  height: ${(p) => p.$h}px;
  display: flex;
  align-items: center;
  padding-left: 5px;
  border: 1px solid #ababab;
  border-radius: 3px;
  background: ${(p) => (p.$off ? "#f0f0f0" : "#fff")};
  color: ${(p) => (p.$off ? "#808080" : "#000")};
`;
const Arrows = styled.span`
  align-self: stretch;
  width: 18px;
  display: flex;
  flex-direction: column;
  align-items: center;
  justify-content: center;
  gap: 3px;
  border-left: 1px solid #b4b4b4;
  background: #f7f7f7;
  border-radius: 0 3px 3px 0;
`;
const Spin = ({ w, h, off, children, extra }) => (
  <SpinBox $w={w} $h={h} $off={off}>
    <Grow>{children}</Grow>
    {extra}
    <Arrows><Caret $up $c={off ? "#9a9a9a" : "#555"} $s={4.5} /><Caret $c={off ? "#9a9a9a" : "#555"} $s={4.5} /></Arrows>
  </SpinBox>
);
const CheckBox = styled.span`
  flex: none;
  width: 17px;
  height: 17px;
  display: flex;
  align-items: center;
  justify-content: center;
  background: #fff;
  border: 1px solid #b9b9b9;
`;
const Check = ({ on }) => (
  <CheckBox>{on && <svg width="13" height="13" viewBox="0 0 13 13"><path d="M2 6L5 11L11 1.500" fill="none" stroke="#000" strokeWidth="2" /></svg>}</CheckBox>
);

/* ------------------------------------------------------------------ */
/* Docks                                                                */
/* ------------------------------------------------------------------ */

const Main = styled.main`
  flex: none;
  height: 783px;
  display: flex;
`;
const LeftColumn = styled.section`
  width: 367px;
  flex: none;
  display: flex;
  flex-direction: column;
`;
const Gutter = styled.div`
  flex: none;
  width: ${(p) => p.$w}px;
  display: flex;
  align-items: center;
  justify-content: center;
  &::before {
    content: "";
    width: 2px;
    height: 20px;
    background: repeating-linear-gradient(#c2c2c2 0 2px, transparent 2px 4px);
  }
`;
const DockTitle = styled.div`
  flex: none;
  height: ${(p) => p.$h}px;
  display: flex;
  align-items: center;
  gap: 4px;
  padding: 0 ${(p) => p.$pr}px 2px ${(p) => p.$pl}px;
  font-size: 14px;
  letter-spacing: -0.05px;
`;
const DockButton = styled.svg`
  width: 14px;
  height: 14px;
  margin-bottom: 1px;
  flex: none;
`;
const DockButtons = () => (
  <>
    <DockButton viewBox="0 0 14 14"><rect x=".7" y=".7" width="12.600" height="12.600" rx="2.500" fill="none" stroke="#777" strokeWidth="1.300" /><path d="M6 5V3H11V8H9M3.500 5.500H8.500V10.500H3.500Z" fill="none" stroke="#666" strokeWidth="1.200" /></DockButton>
    <DockButton viewBox="0 0 14 14"><rect x=".7" y=".7" width="12.600" height="12.600" rx="2.500" fill="none" stroke="#777" strokeWidth="1.300" /><path d="M3.500 3.500L10.500 10.500M10.500 3.500L3.500 10.500" stroke="#555" strokeWidth="2.600" /></DockButton>
  </>
);
const DockTools = styled.div`
  flex: none;
  height: ${(p) => p.$h}px;
  display: flex;
  align-items: center;
  padding: 0 0 ${(p) => p.$pb}px ${(p) => p.$pl}px;
`;
const DockTool = styled.span`
  flex: none;
  width: ${(p) => p.$w || 20}px;
  margin-right: ${(p) => p.$mr}px;
  height: ${(p) => (p.$on ? 30 : 20)}px;
  display: flex;
  align-items: center;
  justify-content: center;
  ${(p) => p.$on && css`
    background: #d9d9d9;
    border: 1px solid #a9a9a9;
    border-radius: 3px;
  `}
`;
const MiniCaret = styled(Caret)`
  align-self: flex-end;
  margin: 0 ${(p) => p.$mr}px ${(p) => p.$mb}px 0;
`;
const TreeFrame = styled.div`
  flex: none;
  height: ${(p) => p.$h}px;
  display: flex;
  background: #fff;
  border: 1px solid #b9b9b9;
  overflow: hidden;
`;
const TreeRows = styled.div`
  flex: 1;
  padding-top: ${(p) => p.$pt}px;
  min-width: 0;
`;
const Row = styled.div`
  height: ${(p) => p.$h || 22.5}px;
  display: flex;
  align-items: center;
  margin-right: ${(p) => p.$mr || 0}px;
  padding-left: ${(p) => p.$pl}px;
  background: ${(p) => (p.$sel ? "#efefef" : "transparent")};
  white-space: nowrap;
`;
const Cell = styled.span`
  flex: none;
  width: ${(p) => p.$w}px;
  display: flex;
  align-items: center;
  justify-content: center;
`;
const RowText = styled.span`
  padding-bottom: 2px;
  letter-spacing: ${(p) => p.$ls || 0}px;
`;
const LayerName = styled.span`
  font-weight: 700;
  font-size: 14px;
  padding-bottom: 1px;
  letter-spacing: ${(p) => (p.$on ? 0.05 : 0.15)}px;
  font-style: ${(p) => (p.$on ? "normal" : "italic")};
  color: ${(p) => (p.$on ? "#000" : "#808080")};
  ${(p) => p.$current && css`
    text-decoration: underline;
    text-decoration-thickness: 1px;
    text-underline-offset: 3px;
  `}
`;
const Swatch = styled.span`
  flex: none;
  width: 20px;
  height: 20px;
  margin-right: 8px;
  background: ${(p) => p.$c};
`;
const ScrollBar = styled.div`
  flex: none;
  width: 18px;
  display: flex;
  flex-direction: column;
  border-left: 1px solid #c6c6c6;
  background: linear-gradient(90deg, #f1f1f1, #fdfdfd);
`;
const ScrollButton = styled.span`
  flex: none;
  height: 17px;
  display: flex;
  align-items: center;
  justify-content: center;
  background: #fafafa;
  border: solid #bdbdbd;
  border-width: ${(p) => (p.$top ? "0 0 1px" : "1px 0 0")};
`;
const ScrollTrack = styled.span`
  flex: none;
  height: ${(p) => p.$h}px;
`;
const ScrollThumb = styled.span`
  flex: 1;
  background: #e4e4e4;
  border-top: 1px solid #b8b8b8;
`;
const Splitter = styled.div`
  flex: none;
  height: 6px;
  display: flex;
  align-items: center;
  justify-content: center;
  &::before {
    content: "";
    width: 20px;
    height: 2px;
    background: repeating-linear-gradient(90deg, #c2c2c2 0 2px, transparent 2px 4px);
  }
`;

const BROWSER = [
  [0, "v", "star", "Favorites", 20], [1, "v", "folder", "C:\\Users\\Juan\\QGIS\\QGIS_LESSON_3", 18, 0.15], [2, "v", "folder", "Course data Lesson 3-20250930", 18, 0.1],
  [3, "", "cells", "buildg.tif", 19], [3, "", "cells", "dtm.tif", 19], [3, "", "cells", "gwlevel.tif", 19], [3, "", "cells", "roads.tif", 19],
  [2, "", "cells", "houses.tif", 19], [2, "", "cells", "houses150m.tif", 19], [2, "", "cells", "isroad.tif", 19],
  [2, ">", "logo", "LESSON_3", 19, 0.15], [2, "", "cells", "roads.tif", 19], [0, ">", "bookTree", "Spatial Bookmarks", 19], [0, ">", "home", "Project Home", 19, 0.05],
];
const LAYERS_TOP = [["gwlevel", 0], ["houses", 0], ["roads150m", 2]];
const LAYERS_BOTTOM = [["houses150m", 1], ["isroad", 1], ["roads", 1], ["buildg", 0], ["dtm", 0]];

const LayerRow = ({ name, state }) => (
  <Row $pl={1} $sel={state === 2}>
    <Cell $w={22}><Caret $right={state !== 2} /></Cell>
    <Cell $w={30}><Check on={state > 0} /></Cell>
    <Cell $w={22}><Icon name="cells" size={19} /></Cell>
    <Cell $w={7} />
    <LayerName $on={state > 0} $current={state === 2}>{name}</LayerName>
  </Row>
);

/* ------------------------------------------------------------------ */
/* Map canvas                                                           */
/* ------------------------------------------------------------------ */

/* Column runs of class 1 (within 150 m of a road), one entry per raster row. */
const RASTER = `2-6,7-10,29-32,34-37,49-52,53-56
2-5,6-9,29-32,34-38,50-53,54-57
1-4,6-9,30-33,35-40,49-53,54-57
1-4,5-8,30-34,36-41,47-52,54-57
1-4,5-8,31-35,38-42,46-51,53-56
1-4,5-8,32-37,39-43,44-49,52-56
0-3,5-17,33-38,40-48,50-55
0-3,4-22,35-39,41-47,49-54
0-3,4-24,36-40,42-44,50-54
0-2,17-25,36-41,45-49,51-55
0-2,3-16,22-26,34-40,42-50,52-56
0-1,3-21,23-27,32-38,41-51,53-56
0-1,2-22,24-36,39-45,48-52,54-57
2-5,16-23,25-34,37-43,49-53,54-58
1-4,20-24,27-32,35-41,50-53,55-58
1-5,21-26,28-29,33-39,51-54,56-59
2-6,22-27,30-37,51-55,56-59
0-1,3-7,23-26,28-35,52-55,57-60
0-2,4-8,23-26,27-33,53-56,57-60
0-3,5-10,23-26,27-30,53-56,58-60
0-4,6-11,23-26,27-30,54-57,59-60
1-5,8-11,23-26,27-30,54-58,59-60
2-6,9-12,22-25,27-30,54-57,59-60
3-6,9-12,22-25,26-29,54-57,58-60
4-7,9-12,21-24,26-29,54-57,58-60
4-7,10-13,21-24,25-28,54-57,58-60
4-7,10-13,20-23,25-28,54-57,59-60
5-8,10-13,19-23,24-27,55-58,59-60
5-9,10-13,18-23,24-27,55-58,59-60
6-9,10-13,17-21,24-27,55-58
6-9,11-14,17-20,22-23,24-27,56-59
7-10,11-14,16-19,21-23,24-27,56-59
6-10,12-15,16-19,20-23,24-27,56-59
5-11,12-18,20-23,24-27,56-59
3-8,13-18,19-23,24-27,57-60
2-7,9-12,13-17,19-22,24-27,57-60
2-5,8-12,14-16,18-21,23-26,59-60
1-4,6-13,14-15,17-21,22-26
2-13,16-20,22-25
2-8,10-13,16-19,21-24
4-6,9-13,17-19,20-24,29-36,54-60
9-12,14-16,20-23,26-38,51-60
8-11,13-17,19-40,49-60
7-11,12-16,20-29,36-43,48-54
7-10,12-15,17-19,22-26,30-35,38-51,55-59
0-1,5-9,11-14,16-21,27-37,40-50,52-60
0-3,4-9,10-13,15-21,22-23,25-39,43-48,51-60
0-7,11-13,14-20,22-24,27-31,35-42,49-55,59-60
1-6,8-10,14-19,21-26,28-33,37-48,49-53
3-5,7-12,13-19,20-27,29-35,39-48,50-53
0-2,6-12,13-18,20-23,24-28,31-36,42-49,50-53
0-3,7-12,14-17,19-22,25-30,33-37,46-49,51-54
0-3,4-6,9-13,14-15,18-22,26-32,34-39,46-50,51-54
0-2,4-8,16-21,28-33,35-40,45-49,51-54
3-13,14-20,30-34,37-42,44-48,50-53
1-13,14-18,31-36,38-43,44-47,49-53
0-5,8-13,15-18,32-37,40-46,48-52
0-3,11-14,16-19,34-39,41-46,47-51
0-1,11-15,16-19,35-40,42-45,47-50
12-15,17-20,37-41,46-49`.split("\n").map((r) => r.split(",").map((s) => s.split("-").map(Number)));

const MapFrame = styled.section`
  flex: none;
  width: 900px;
  height: 783px;
  background: #fff;
  border: 1px solid #b9b9b9;
  border-top: 0;
  padding: 33px 0 0 103px;
`;
const Raster = styled.svg`
  display: block;
  background: #de2d2d;
`;
const px = (n) => Math.round((n * 745) / 60);
const MapCanvas = () => (
  <MapFrame>
    <Raster width="745" height="745" viewBox="0 0 745 745" shapeRendering="crispEdges">
      {RASTER.map((runs, y) => runs.map(([a, b]) => (
        <rect key={y + "-" + a} x={px(a)} y={px(y)} width={px(b) - px(a)} height={px(y + 1) - px(y)} fill="#0fdf33" />
      )))}
    </Raster>
  </MapFrame>
);

/* ------------------------------------------------------------------ */
/* Layer styling dock                                                   */
/* ------------------------------------------------------------------ */

const RightColumn = styled.section`
  flex: 1;
  display: flex;
  flex-direction: column;
  font-size: 12.5px;
  letter-spacing: -0.2px;
  min-width: 0;
`;
const LayerPick = styled.div`
  flex: none;
  display: flex;
  padding: 0 2px 0 4px;
`;
const StyleBody = styled.div`
  flex: none;
  height: 682px;
  margin-top: 11px;
  display: flex;
  padding: 0 2px 0 4px;
`;
const SideTabs = styled.div`
  flex: none;
  width: 47px;
  margin-right: 4px;
  display: flex;
  flex-direction: column;
`;
const SideTab = styled.span`
  flex: none;
  height: ${(p) => p.$h}px;
  display: flex;
  align-items: center;
  justify-content: center;
  background: ${(p) => (p.$current ? "transparent" : "#5d5d5d")};
  ${(p) => p.$current && "padding: 0 0 2px 6px;"}
`;
const SideFill = styled.span`
  flex: 1;
  background: #5d5d5d;
`;
const StylePage = styled.div`
  flex: 1;
  display: flex;
  flex-direction: column;
  min-width: 0;
`;
const ScrollArea = styled.div`
  flex: none;
  height: 645px;
  display: flex;
  justify-content: space-between;
  overflow: hidden;
`;
const ScrollContent = styled.div`
  width: 560px;
  flex: none;
  padding-top: 4px;
  display: flex;
  flex-direction: column;
`;
const Field = styled.div`
  flex: none;
  display: flex;
  align-items: center;
  margin-bottom: ${(p) => p.$mb}px;
`;
const FieldLabel = styled.label`
  flex: none;
  width: ${(p) => p.$w}px;
  white-space: nowrap;
`;
const ClassTable = styled.div`
  flex: none;
  height: 349px;
  background: #fff;
  border-top: 1px solid #b4b4b4;
  font-size: 14px;
  letter-spacing: 0.12px;
`;
const TableHead = styled.div`
  height: 25px;
  display: grid;
  grid-template-columns: 125px 74px 1fr;
  background: linear-gradient(#fbfbfb, #ececec);
  border-bottom: 1px solid #b4b4b4;
`;
const HeadCell = styled.span`
  padding-left: 3px;
  padding-top: 2px;
  line-height: 20px;
  border-right: 1px solid #c6c6c6;
  &:last-child { border-right: 0; }
`;
const TableRow = styled.div`
  height: 55px;
  display: grid;
  grid-template-columns: 125px 74px 1fr;
  align-items: center;
  background: ${(p) => (p.$alt ? "#efefef" : "#fff")};
`;
const ValueCell = styled.span`
  padding-left: 30px;
`;
const ColorCell = styled.span`
  width: 53px;
  height: 53px;
  margin-left: 11px;
  border-radius: 9px;
  background: ${(p) => p.$c};
`;
const LabelCell = styled.span`
  padding-left: 6px;
`;
const ButtonRow = styled.div`
  flex: none;
  height: 30px;
  margin-top: 8px;
  display: flex;
  align-items: center;
`;
const Space = styled.span`
  flex: none;
  width: ${(p) => p.$w}px;
`;
const GroupTitle = styled.h3`
  flex: none;
  margin: 9px 0 5px 2px;
  font-size: 12.8px;
  line-height: 17px;
  letter-spacing: -0.25px;
`;
const GroupBox = styled.div`
  flex: none;
  height: 140px;
  margin-left: 1px;
  padding: 9px 14px 0 13px;
  background: #ececec;
  border: 1px solid #d4d4d4;
`;
const Slider = styled.div`
  flex: none;
  width: 330px;
  height: 18px;
  display: flex;
  align-items: center;
`;
const SliderTrack = styled.span`
  flex: 1;
  height: 7px;
  border: 1px solid ${(p) => (p.$on ? "#1769b5" : "#b9b9b9")};
  border-radius: 2px;
  background: ${(p) => (p.$on ? "linear-gradient(#2487dc, #1b8cf0)" : "#d4d4d4")};
`;
const SliderKnob = styled.span`
  flex: none;
  width: 16px;
  height: 17px;
  border: 1px solid #a6a6a6;
  border-radius: 3px;
  background: #fbfbfb;
`;
const Footer = styled.div`
  flex: 1;
  display: flex;
  align-items: center;
  padding-top: 7px;
`;
const Tabs = styled.div`
  flex: none;
  height: 32px;
  margin-top: 4px;
  display: flex;
  align-items: flex-start;
  border-top: 1px solid #b9b9b9;
`;
const Tab = styled.span`
  width: ${(p) => p.$w}px;
  height: ${(p) => (p.$current ? 27 : 24)}px;
  display: flex;
  align-items: center;
  justify-content: center;
  border: 1px solid #b2b2b2;
  border-top: 0;
  border-radius: 0 0 3px 3px;
  background: ${(p) => (p.$current ? "#f6f6f6" : "#dcdcdc")};
`;

const SliderField = ({ label, mb }) => (
  <Field $mb={mb}>
    <FieldLabel $w={91}>{label}</FieldLabel>
    <Slider><SliderTrack $on /><SliderKnob /><SliderTrack /></Slider>
    <Space $w={9} />
    <Spin w={101} h={23}>0</Spin>
  </Field>
);

const LayerStyling = () => (
  <RightColumn>
    <DockTitle $h={28} $pl={5} $pr={1}><Grow>Layer Styling</Grow><DockButtons /></DockTitle>
    <LayerPick><Combo $pr={9}><Icon name="cells" size={19} /><Grow>roads150m</Grow><Caret /></Combo></LayerPick>
    <StyleBody>
      <SideTabs>
        <SideTab $current $h={47}><Icon name="brush" size={36} /></SideTab>
        <SideTab $h={52}><Icon name="transp" size={36} /></SideTab>
        <SideTab $h={44}><Icon name="histogram" size={34} /></SideTab>
        <SideTab $h={58}><Icon name="tablePanel" size={36} /></SideTab>
        <SideTab $h={42}><Icon name="relief" size={36} /></SideTab>
        <SideTab $h={58}><Icon name="brushes" size={37} /></SideTab>
        <SideTab $h={44}><Icon name="history" size={32} /></SideTab>
        <SideFill />
      </SideTabs>
      <StylePage>
        <ScrollArea>
          <ScrollContent>
            <Field $mb={8}><Combo><Icon name="palette" size={18} /><Grow>Paletted/Unique values</Grow><Caret /></Combo></Field>
            <Field $mb={7}><FieldLabel $w={69}>Band</FieldLabel><Combo><Grow>Band 1 (Gray)</Grow><Caret /></Combo></Field>
            <Field $mb={8}><FieldLabel $w={69}>Color ramp</FieldLabel><PushButton $h={28} $heavy>Random colors</PushButton><PushButton $w={15} $h={28}><Caret /></PushButton></Field>
            <ClassTable>
              <TableHead><HeadCell>Value</HeadCell><HeadCell>Color</HeadCell><HeadCell>Label</HeadCell></TableHead>
              <TableRow><ValueCell>0</ValueCell><ColorCell $c="#de2d2d" /><LabelCell>&gt;150 meters from Roads</LabelCell></TableRow>
              <TableRow $alt><ValueCell>1</ValueCell><ColorCell $c="#0fdf33" /><LabelCell>&lt;= 150 meters from Roads</LabelCell></TableRow>
            </ClassTable>
            <ButtonRow>
              <PushButton $w={216}>Classify</PushButton><Space $w={8} />
              <PushButton $w={35} $h={30}><Icon name="plusFill" size={19} /></PushButton><Space $w={7} />
              <PushButton $w={35} $h={30}><Icon name="minusFill" size={19} /></PushButton><Space $w={8} />
              <PushButton $w={215}>Delete All</PushButton><Space $w={8} />
              <PushButton $h={26}>...<MiniCaret $s={3} $mr={-4} $mb={4} /></PushButton>
            </ButtonRow>
            <GroupTitle>Layer Rendering</GroupTitle>
            <GroupBox>
              <Field $mb={8}><FieldLabel $w={91}>Blending mode</FieldLabel><Combo><Grow>Normal</Grow><Caret /></Combo></Field>
              <SliderField label="Brightness" mb={9} />
              <SliderField label="Saturation" mb={0} />
            </GroupBox>
          </ScrollContent>
          <ScrollBar>
            <ScrollButton $top><Caret $up /></ScrollButton>
            <ScrollTrack $h={368} />
            <ScrollThumb />
            <ScrollButton><Caret /></ScrollButton>
          </ScrollBar>
        </ScrollArea>
        <Footer>
          <PushButton $w={30} $h={29}><Icon name="undoC" size={16} /></PushButton><Space $w={7} />
          <PushButton $w={30} $h={29}><Icon name="redo" size={16} /></PushButton>
          <Grow /><Check on /><Space $w={6} /><FieldLabel $w={80}>Live update</FieldLabel>
          <PushButton $w={100} disabled>Apply</PushButton>
        </Footer>
      </StylePage>
    </StyleBody>
    <Tabs><Tab $w={102} $current>Layer Styling</Tab><Tab $w={135}>Processing Toolbox</Tab></Tabs>
  </RightColumn>
);

/* ------------------------------------------------------------------ */
/* Status bar                                                           */
/* ------------------------------------------------------------------ */

const StatusBar = styled.footer`
  flex: none;
  height: 33px;
  display: flex;
  align-items: center;
  padding: 3px 8px 0 5px;
  font-size: 12.7px;
`;
const TextBox = styled.span`
  flex: none;
  width: ${(p) => p.$w}px;
  height: 27px;
  display: flex;
  align-items: center;
  gap: 9px;
  padding-left: ${(p) => p.$pl}px;
  background: #fff;
  border: 1px solid #adadad;
  border-radius: 3px;
  color: ${(p) => (p.$hint ? "#7a7a7a" : "#000")};
  letter-spacing: ${(p) => p.$ls || 0}px;
  overflow: hidden;
  white-space: nowrap;
`;
const StatusText = styled.span`
  flex: none;
  width: ${(p) => p.$w}px;
  letter-spacing: ${(p) => p.$ls || 0}px;
  white-space: nowrap;
`;
const DropPart = styled.span`
  align-self: stretch;
  width: 26px;
  display: flex;
  align-items: center;
  justify-content: center;
  border-left: 1px solid #b4b4b4;
  background: linear-gradient(#fdfdfd, #ececec);
`;
const ClearMark = styled.svg`
  flex: none;
  margin-right: 13px;
`;

export default function App() {
  return (
    <Window>
      <Global />
      <TitleBar>
        <Icon name="logo" size={19} />
        <Title>*LESSON_3 — QGIS [JuanGuerrero]</Title>
        <WinButton $w={58}><svg width="13" height="13"><path d="M0 6.500H12" stroke="#000" /></svg></WinButton>
        <WinButton $w={58}><svg width="13" height="13" viewBox="0 0 13 13"><rect x=".7" y="2.700" width="9.500" height="9.500" rx="1.500" fill="none" stroke="#000" strokeWidth="1.200" /><path d="M3.500 .8H10Q12.200 .8 12.200 3V9.500" fill="none" stroke="#000" strokeWidth="1.200" /></svg></WinButton>
        <WinButton $w={61}><svg width="13" height="13" viewBox="0 0 13 13"><path d="M.7 .7L12.300 12.300M12.300 .7L.7 12.300" stroke="#000" strokeWidth="1.200" /></svg></WinButton>
      </TitleBar>
      <MenuBar>
        {MENUS.map(([a, u, b, w]) => <MenuItem key={u + b} $w={w}>{a}<u>{u}</u>{b}</MenuItem>)}
      </MenuBar>
      <ToolRow><Tools items={ROW1} pitch={41.35} /></ToolRow>
      <ToolRow><Tools items={ROW2} pitch={41.37} /></ToolRow>
      <ToolRow>
        <Tools items={ROW3A} pitch={41.3} />
        <Spin w={100} h={25} off>12</Spin>
        <Space $w={2} />
        <Combo $w={104} $h={26} $off $pr={8} $fs={13}><Grow>px</Grow><Caret $c="#9a9a9a" /></Combo>
        <Space $w={3} />
        <Tools items={ROW3B} pitch={41.2} />
      </ToolRow>
      <Main>
        <LeftColumn>
          <DockTitle $h={28} $pl={5} $pr={1}><Grow>Browser</Grow><DockButtons /></DockTitle>
          <DockTools $h={35} $pb={5} $pl={10}>
            <DockTool $mr={11}><Icon name="addLayer" size={19} /></DockTool>
            <DockTool $mr={12}><Icon name="refresh" size={19} /></DockTool>
            <DockTool $mr={11}><Icon name="funnel" size={19} /></DockTool>
            <DockTool $mr={11}><Icon name="collapse" size={19} /></DockTool>
            <DockTool $mr={0}><Icon name="info" size={18} /></DockTool>
          </DockTools>
          <TreeFrame $h={312}>
            <TreeRows $pt={1}>
              {BROWSER.map(([lvl, arrow, icon, text, size, ls], i) => (
                <Row key={i} $pl={lvl * 20} $mr={i === 3 ? 29 : 0} $sel={i === 3}>
                  <Cell $w={20}>{arrow && <Caret $right={arrow === ">"} />}</Cell>
                  <Cell $w={28}><Icon name={icon} size={size} /></Cell>
                  <Cell $w={4} />
                  <RowText $ls={ls}>{text}</RowText>
                </Row>
              ))}
            </TreeRows>
            <ScrollBar>
              <ScrollButton $top><Caret $up /></ScrollButton>
              <ScrollTrack $h={109} />
              <ScrollThumb />
              <ScrollButton><Caret /></ScrollButton>
            </ScrollBar>
          </TreeFrame>
          <Splitter />
          <DockTitle $h={30} $pl={5} $pr={1}><Grow>Layers</Grow><DockButtons /></DockTitle>
          <DockTools $h={45} $pb={4} $pl={5}>
            <DockTool $on $w={30} $mr={6}><Icon name="brush" size={19} /></DockTool>
            <DockTool $mr={17}><Icon name="addGroup" size={19} /></DockTool>
            <DockTool $mr={0}><Icon name="eye" size={19} /></DockTool><MiniCaret $s={3.5} $mr={15} $mb={6} />
            <DockTool $mr={0}><Icon name="funnel" size={19} /></DockTool><MiniCaret $s={3.5} $mr={15} $mb={6} />
            <DockTool $mr={11}><Icon name="epsilon" size={19} off /></DockTool><Caret $c="#9a9a9a" /><Space $w={10} />
            <DockTool $mr={12}><Icon name="expand" size={19} /></DockTool>
            <DockTool $mr={11}><Icon name="collapse" size={19} /></DockTool>
            <DockTool $mr={0}><Icon name="removeLayer" size={19} /></DockTool>
          </DockTools>
          <TreeFrame $h={327}>
            <TreeRows $pt={0}>
              {LAYERS_TOP.map(([n, s]) => <LayerRow key={n} name={n} state={s} />)}
              <Row $h={22} $pl={54}><RowText>Band 1 (Gray)</RowText></Row>
              <Row $h={22} $pl={54}><Swatch $c="#de2d2d" /><RowText $ls={0.12}>&gt;150 meters from Roads</RowText></Row>
              <Row $h={22} $pl={54}><Swatch $c="#0fdf33" /><RowText $ls={0.2}>&lt;= 150 meters from Roads</RowText></Row>
              {LAYERS_BOTTOM.map(([n, s]) => <LayerRow key={n} name={n} state={s} />)}
            </TreeRows>
          </TreeFrame>
        </LeftColumn>
        <Gutter $w={8} />
        <MapCanvas />
        <Gutter $w={9} />
        <LayerStyling />
      </Main>
      <StatusBar>
        <TextBox $w={250} $pl={10} $hint><Icon name="search" size={16} />Type to locate (Ctrl+K)</TextBox>
        <Space $w={10} />
        <StatusText $w={659} $ls={0.33}>Pan distance 445.085 m (75.332683°W)</StatusText>
        <StatusText $w={70}>Coordinate</StatusText>
        <TextBox $w={126} $pl={8} $ls={0.3}>289298, 3352232</TextBox>
        <Space $w={5} /><Icon name="mouse" size={20} /><Space $w={17} />
        <StatusText $w={36}>Scale</StatusText>
        <TextBox $w={96} $pl={4} $ls={0.15}><Grow>1:19049</Grow><DropPart><Caret /></DropPart></TextBox>
        <Space $w={14} /><Icon name="lock" size={17} /><Space $w={10} />
        <StatusText $w={60}>Magnifier</StatusText>
        <Spin w={100} h={25} extra={<ClearMark width="16" height="12" viewBox="0 0 16 12"><path d="M5 0H16V12H5L0 6Z" fill="#8a8a8a" /><path d="M6 3L12 9M12 3L6 9" stroke="#fff" strokeWidth="1.500" /></ClearMark>}>250%</Spin>
        <Space $w={12} />
        <StatusText $w={63}>Rotation</StatusText>
        <Spin w={100} h={25}>0.0 °</Spin>
        <Space $w={8} /><Check on /><Space $w={7} />
        <StatusText $w={63}>Render</StatusText>
        <Icon name="crs" size={19} /><Space $w={3} />
        <StatusText $w={104} $ls={0.15}>EPSG:32630</StatusText>
        <Icon name="bubble" size={20} />
      </StatusBar>
    </Window>
  );
}
